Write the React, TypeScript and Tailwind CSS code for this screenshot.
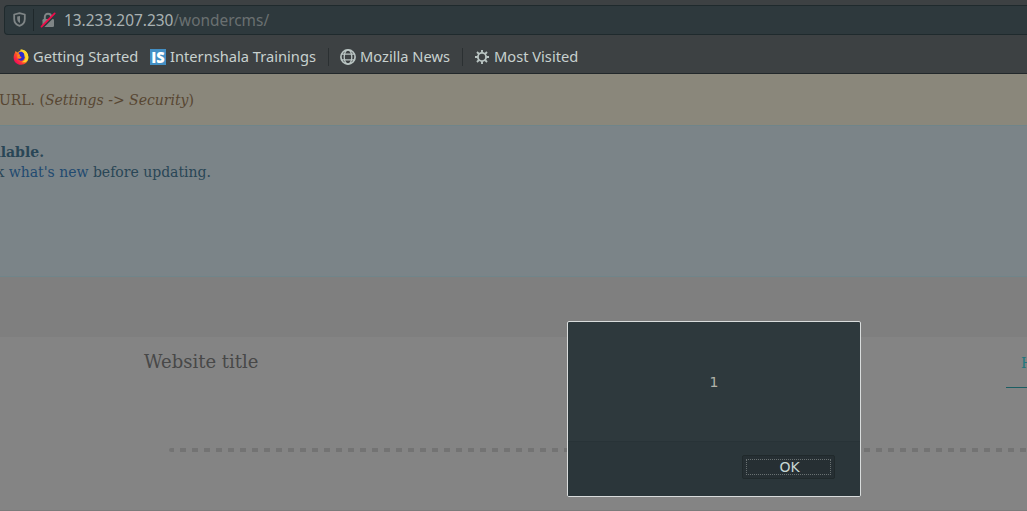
import React from "react";

function ShieldIcon() {
  return (
    <svg className="-mt-px h-[15px] w-[13px] shrink-0" viewBox="0 0 13 15" fill="none">
      <path d="M6.5 1.2 L11.8 2.5 V7 C11.8 10.4 9.4 12.8 6.5 13.8 C3.6 12.8 1.2 10.4 1.2 7 V2.5 Z" stroke="#7f8586" strokeWidth="1.8" strokeLinejoin="round" />
      <path d="M7 4 V11 C5 10 4.2 8.6 4.2 6.8 V4.4 Z" fill="#7f8586" />
    </svg>
  );
}

function InsecureLockIcon() {
  return (
    <svg className="h-[16px] w-[16px] shrink-0" viewBox="0 0 16 16" fill="none">
      <path d="M4.8 8 V5.2 C4.8 3 6 1.8 8 1.8 C10 1.8 11.2 3 11.2 5.2 V8" stroke="#7f8586" strokeWidth="2" />
      <rect x="2.5" y="7" width="11.5" height="8" rx="1.3" fill="#7f8586" />
      <path d="M2 16 L15.6 2.4" stroke="#2e393d" strokeWidth="2" />
      <path d="M1.5 14.6 L14.7 1.4" stroke="#f20b4a" strokeWidth="1.8" strokeLinecap="round" />
    </svg>
  );
}

function FirefoxIcon() {
  return (
    <svg className="h-4 w-4 shrink-0" viewBox="0 0 16 16">
      <defs>
        <linearGradient id="flame" x1="0.9" y1="0.1" x2="0.15" y2="0.8">
          <stop offset="0" stopColor="#fff44a" />
          <stop offset="0.4" stopColor="#ffb21c" />
          <stop offset="0.65" stopColor="#ff5328" />
          <stop offset="1" stopColor="#f50f55" />
        </linearGradient>
      </defs>
      <path d="M2.6 2 L4.3 3.5 C6 2.4 7 2.2 8.2 .6 C12.8 1 15.4 4.4 15.4 8.6 C15.4 12.8 12.2 15.8 8 15.8 C3.8 15.8 .6 12.7 .6 8.5 C.6 6 1.6 4.6 2.6 2 Z" fill="url(#flame)" />
      <path d="M5.3 4 C7 2.2 9.6 2.6 11 4.6 C12.6 7 12.1 10 10 11.3 C8 12.3 5.7 11.5 4.8 9.6 L7.5 9.5 L8.7 8 L6.8 7.3 L7 6 Z" fill="#2c2bcf" />
      <path d="M7 .6 C10.6 2.4 12 5 11.5 8 C12 7.5 12.3 7 12.5 6.4 C13.4 9.7 11.5 12.5 8.4 13 C13 14.3 15.5 11 15.2 7.4 C14.8 3.6 11.8 .8 7 .6" fill="#ffd72d" />
      <path d="M4.3 6 L7 6.1 L5.5 7.7 L8.4 8 L7 9.5 L4.5 9.4 Z" fill="#ff8b1a" />
    </svg>
  );
}

function GlobeIcon() {
  return (
    <svg className="h-4 w-4 shrink-0" viewBox="0 0 16 16" fill="none" stroke="#b9c4c2" strokeWidth="1.3">
      <circle cx="8" cy="8" r="7.1" strokeWidth="1.7" />
      <ellipse cx="8" cy="8" rx="3.8" ry="7.2" />
      <path d="M2 5.2 H14 M1.5 10.8 H14.5" />
    </svg>
  );
}

function GearIcon() {
  return (
    <svg className="h-[14px] w-[14px] shrink-0" viewBox="0 0 14 14" fill="none" stroke="#b9c4c2">
      <circle cx="7" cy="7" r="4.1" strokeWidth="1.9" />
      <path d="M7 0 V2.7 M7 11.3 V14 M0 7 H2.7 M11.3 7 H14 M2 2 L4.1 4.1 M9.9 9.9 L12 12 M12 2 L9.9 4.1 M4.1 9.9 L2 12" strokeWidth="1.9" />
    </svg>
  );
}

function BrowserToolbar() {
  return (
    <header className="flex h-[74px] shrink-0 flex-col border-b border-[#22282b] bg-[#3d4143] pt-[5px] font-['Noto_Sans',sans-serif]">
      <div className="ml-1 flex h-[30px] shrink-0 items-center rounded-l-[4px] border border-r-0 border-[#1f2a2d] bg-[#2e393d] pl-2">
        <ShieldIcon />
        <span className="ml-[7px] h-[22px] w-px bg-[#1f282b]" />
        <span className="ml-[6px] flex"><InsecureLockIcon /></span>
        <span className="ml-2 mt-0.5 whitespace-nowrap text-[15.42px] leading-5 text-[#a9b1b2]">
          13.233.207.230<span className="text-[#6a7071]">/wondercms/</span>
        </span>
      </div>
      <nav className="mt-[10px] flex h-6 items-center whitespace-nowrap pl-[13px] text-[14.67px] leading-5 text-[#c8d1cf]">
        <FirefoxIcon />
        <span className="-mt-0.5 ml-1 w-[117px]">Getting Started</span>
        <svg className="h-4 w-4 shrink-0" viewBox="0 0 16 16">
          <rect width="16" height="16" fill="#438fc5" />
          <text x="8" y="13.5" textAnchor="middle" textLength="13.5" lengthAdjust="spacingAndGlyphs" fill="#ffffff" fontFamily="Open Sans, sans-serif" fontWeight="800" fontSize="15">IS</text>
        </svg>
        <span className="-mt-0.5 ml-1 w-[158px]">Internshala Trainings</span>
        <span className="h-[18px] w-px bg-[#2b3032]" />
        <span className="ml-[11px] flex"><GlobeIcon /></span>
        <span className="-mt-0.5 ml-1 w-[102px]">Mozilla News</span>
        <span className="h-[18px] w-px bg-[#2b3032]" />
        <span className="ml-3 flex"><GearIcon /></span>
        <span className="-mt-0.5 ml-[5px]">Most Visited</span>
      </nav>
    </header>
  );
}

function AlertDialog() {
  return (
    <div role="alertdialog" className="absolute left-[567px] top-[321px] flex h-[176px] w-[294px] flex-col rounded-[2px] border border-[#d9dcdc] bg-[#2e393d] font-['DejaVu_Sans',sans-serif]">
      <div className="flex h-[119px] items-center justify-center pt-0.5 text-[14px] text-[#b1b2a9]">1</div>
      <div className="flex flex-1 items-start justify-end rounded-b-[1px] border-t border-[#283337] bg-[#2b363a] pr-[25px] pt-[13px]">
        <button className="flex h-6 w-[93px] items-center justify-center rounded-[2px] border border-[#20292b] bg-[#262f33] text-[14px] text-[#c7d7d4]">
          <span className="flex h-4 w-[85px] items-center justify-center border border-dotted border-[#697172] pl-[2px] pt-px">OK</span>
        </button>
      </div>
    </div>
  );
}

export default function App() {
  return (
    <div className="relative flex h-[511px] w-[1027px] flex-col overflow-hidden bg-[#848484] font-['DejaVu_Serif',serif]">
      <BrowserToolbar />
      <section className="h-[51px] shrink-0 bg-[#8a877b] pt-4 text-[14px] leading-5 text-[#574632]">
        <p className="flex w-[194px] justify-end overflow-hidden whitespace-pre">URL. (<em>Settings -&gt; Security</em>)</p>
      </section>
      <section className="h-[152px] shrink-0 border-y border-[#70858a] bg-[#7b8488] pt-4 text-[14px] leading-5 text-[#294656]">
        <p className="flex w-11 justify-end overflow-hidden font-bold">available.</p>
        <p className="flex w-[211px] justify-end overflow-hidden whitespace-pre">Check <span className="text-[#224a70]">what's new</span> before updating.</p>
      </section>
      <div className="h-[60px] shrink-0 bg-[#7f7f7f]" />
      <main className="flex h-[174px] flex-col border-b border-[#7b7b7b]">
        <div className="flex h-[111px] items-start justify-between">
          <h1 className="ml-36 mt-[13px] whitespace-nowrap text-[18px] leading-6 text-[#484848]">Website title</h1>
          <div className="mt-4 h-[35px] w-[21px] overflow-hidden whitespace-nowrap border-b border-[#1b5e63] pl-[15px] text-[14px] leading-5 text-[#22777f]">Home</div>
        </div>
        <div className="ml-[169px] h-1 rounded-l-full bg-[repeating-linear-gradient(90deg,#737373_0px,#737373_5px,transparent_5px,transparent_11px,#737373_11px,#737373_12px)]" />
      </main>
      <AlertDialog />
    </div>
  );
}
